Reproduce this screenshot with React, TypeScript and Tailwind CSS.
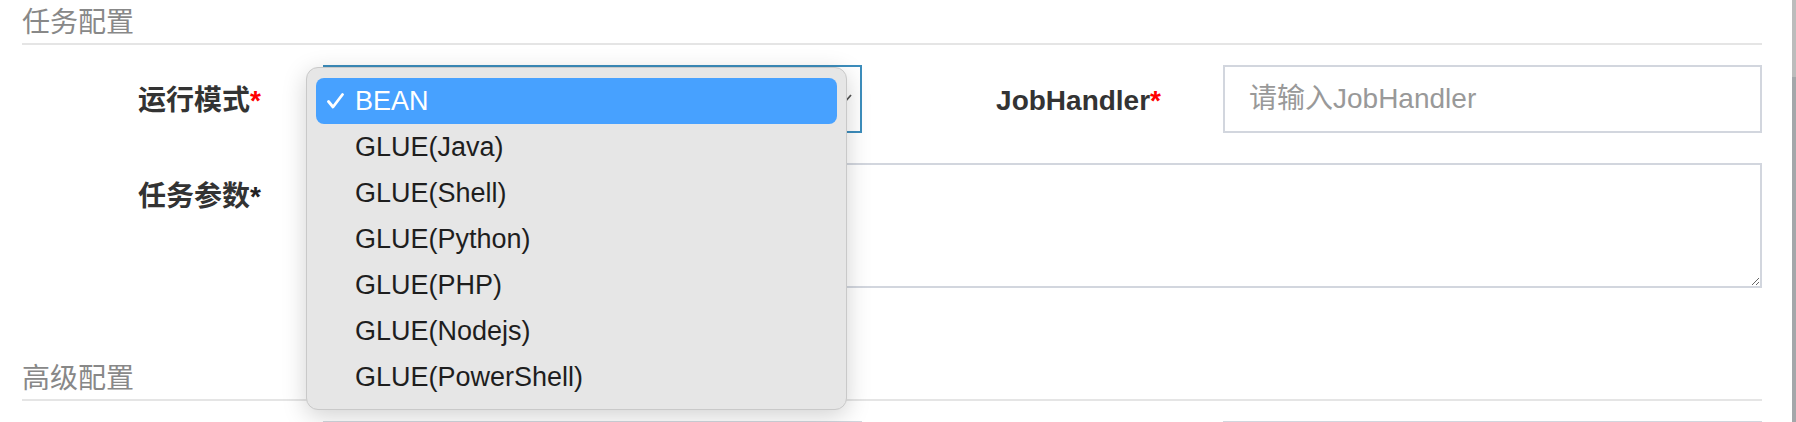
import { useState } from "react";

const FONT = { fontFamily: '"Liberation Sans", "Noto Sans CJK SC", sans-serif' };

const glueTypes = [
  "BEAN",
  "GLUE(Java)",
  "GLUE(Shell)",
  "GLUE(Python)",
  "GLUE(PHP)",
  "GLUE(Nodejs)",
  "GLUE(PowerShell)",
];

const SectionTitle = ({ title, className = "" }: { title: string; className?: string }) => (
  <div className={`h-[45px] border-b-2 border-[#e5e5e5] pt-[3px] text-[28px] leading-[40px] text-[#888] ${className}`}>
    {title}
  </div>
);

const Label = ({ text, required = "red" }: { text: string; required?: "red" | "dark" }) => (
  <span className="font-bold text-[28px] text-[#333]">
    {text}
    <span className={required === "red" ? "text-[#f00]" : "text-[#222]"}>*</span>
  </span>
);

const CheckIcon = () => (
  <svg width="17" height="16" viewBox="0 0 17 16" fill="none">
    <polyline points="1.5,8.5 6,14 15.5,1.5" stroke="#fff" strokeWidth="2.8" strokeLinecap="round" strokeLinejoin="round" />
  </svg>
);

const Chevron = () => (
  <svg width="16" height="10" viewBox="0 0 16 10" fill="none">
    <polyline points="1,1 8,9 15,1" stroke="#555" strokeWidth="1.8" />
  </svg>
);

const SelectMenu = ({ selected }: { selected: string }) => (
  <div className="absolute left-[306px] top-[67px] w-[541px] h-[343px] rounded-[12px] bg-[#e6e6e6] border border-[#c9c9c9] shadow-[0_6px_24px_rgba(0,0,0,0.18)] pt-[10px] px-[9px]">
    {glueTypes.map((item) => {
      const active = item === selected;
      return (
        <div
          key={item}
          className={`flex items-center h-[46px] rounded-[8px] text-[27px] leading-[46px] ${
            active ? "bg-[#47a1ff] text-white" : "text-[#1e1e1e]"
          }`}>
          <div className="w-[39px] pl-[11px] flex items-center">{active && <CheckIcon />}</div>
          <span>{item}</span>
        </div>
      );
    })}
  </div>
);

export default function App() {
  const [mode] = useState("BEAN");

  return (
    <div className="relative flex w-[1796px] h-[422px] overflow-hidden bg-white" style={FONT}>
      <div className="flex-1 pl-[22px] pr-[30px]">
        <SectionTitle title="任务配置" />

        <div className="mt-[20px] flex items-center h-[68px]">
          <div className="w-[239px] text-right pt-[4px]">
            <Label text="运行模式" />
          </div>
          {/* the open menu covers the selected value, only the chevron edge shows */}
          <div className="ml-[62px] w-[539px] h-[68px] border-2 border-[#3c8dbc] flex items-center justify-end pr-[8px]">
            <Chevron />
          </div>
          <div className="w-[299px] text-right pt-[4px]">
            <Label text="JobHandler" />
          </div>
          <input
            className="ml-[62px] w-[539px] h-[68px] border-2 border-[#d2d6de] px-[24px] text-[28px] text-[#555] outline-none placeholder:text-[#999]"
            placeholder="请输入JobHandler"
          />
        </div>

        <div className="mt-[30px] flex">
          <div className="w-[239px] text-right pt-[17px] leading-[34px]">
            <Label text="任务参数" required="dark" />
          </div>
          <textarea className="ml-[62px] flex-1 h-[125px] border-2 border-[#d2d6de] outline-none resize-y" />
        </div>

        <SectionTitle title="高级配置" className="mt-[68px]" />

        <div className="mt-[20px] flex">
          <div className="ml-[301px] w-[539px] h-[68px] border-2 border-[#d2d6de]" />
          <div className="ml-[361px] w-[539px] h-[68px] border-2 border-[#d2d6de]" />
        </div>
      </div>

      <div className="w-[4px] flex flex-col">
        <div className="h-[77px] bg-[#bcbcbc]" />
        <div className="flex-1 bg-[#a4a7aa]" />
      </div>

      <SelectMenu selected={mode} />
    </div>
  );
}
